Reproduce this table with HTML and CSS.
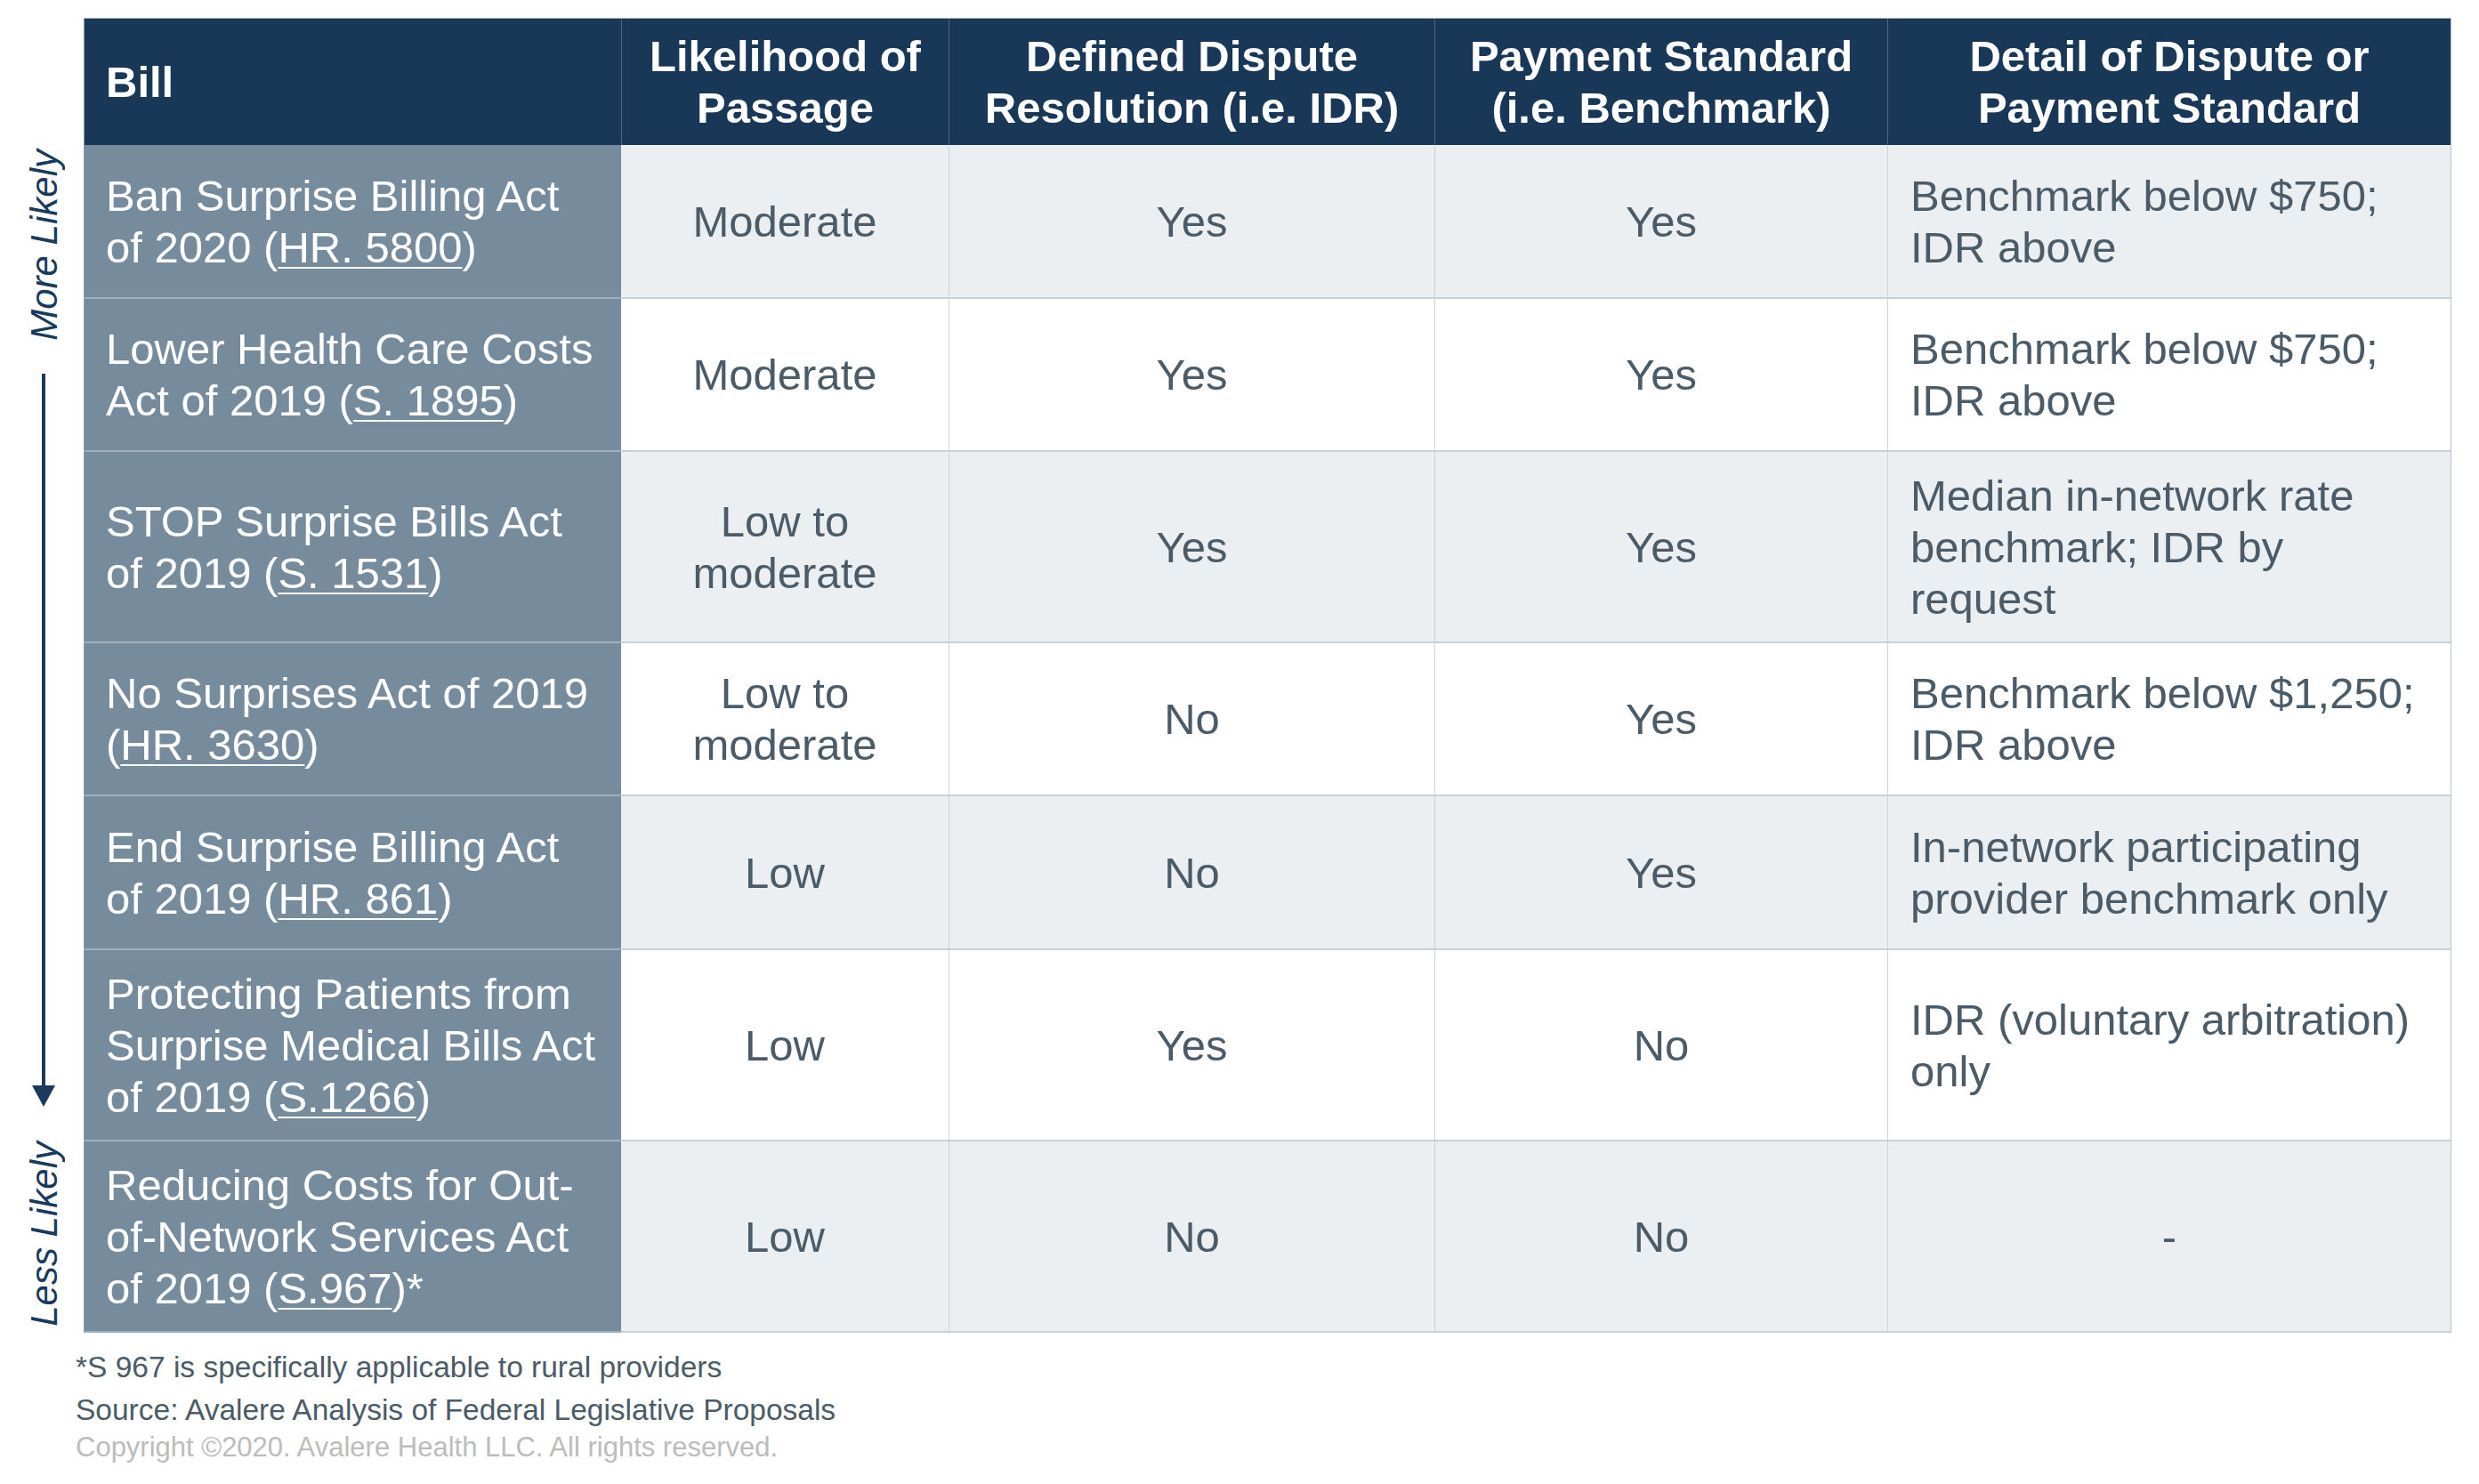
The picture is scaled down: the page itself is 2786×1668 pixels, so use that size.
FILE: index.html
```html
<!DOCTYPE html>
<html lang="en">
<head>
<meta charset="utf-8">
<title>Surprise Billing Legislation</title>
<link rel="stylesheet" href="styles.css">
</head>
<body>
<div class="page">
  <div class="figure">
    <div class="gutter">
      <div class="axis-label">More Likely</div>
      <div class="axis-line"></div>
      <div class="axis-head"></div>
      <div class="axis-label">Less Likely</div>
    </div>
    <div class="table">
      <div class="row head">
        <div class="cell bill"><div class="txt">Bill</div></div>
        <div class="cell center"><div class="txt">Likelihood of<br>Passage</div></div>
        <div class="cell center"><div class="txt">Defined Dispute<br>Resolution (i.e. IDR)</div></div>
        <div class="cell center"><div class="txt">Payment Standard<br>(i.e. Benchmark)</div></div>
        <div class="cell center"><div class="txt">Detail of Dispute or<br>Payment Standard</div></div>
      </div>
      <div class="row body shade h173">
        <div class="cell bill"><div class="txt">Ban Surprise Billing Act<br>of 2020 (<span class="ref">HR. 5800</span>)</div></div>
        <div class="cell center"><div class="txt">Moderate</div></div>
        <div class="cell center sep"><div class="txt">Yes</div></div>
        <div class="cell center sep"><div class="txt">Yes</div></div>
        <div class="cell detail sep"><div class="txt">Benchmark below $750;<br>IDR above</div></div>
      </div>
      <div class="row body h172">
        <div class="cell bill"><div class="txt">Lower Health Care Costs<br>Act of 2019 (<span class="ref">S. 1895</span>)</div></div>
        <div class="cell center"><div class="txt">Moderate</div></div>
        <div class="cell center sep"><div class="txt">Yes</div></div>
        <div class="cell center sep"><div class="txt">Yes</div></div>
        <div class="cell detail sep"><div class="txt">Benchmark below $750;<br>IDR above</div></div>
      </div>
      <div class="row body shade h215">
        <div class="cell bill"><div class="txt">STOP Surprise Bills Act<br>of 2019 (<span class="ref">S. 1531</span>)</div></div>
        <div class="cell center"><div class="txt">Low to<br>moderate</div></div>
        <div class="cell center sep"><div class="txt">Yes</div></div>
        <div class="cell center sep"><div class="txt">Yes</div></div>
        <div class="cell detail sep"><div class="txt">Median in-network rate<br>benchmark; IDR by<br>request</div></div>
      </div>
      <div class="row body h172">
        <div class="cell bill"><div class="txt">No Surprises Act of 2019<br>(<span class="ref">HR. 3630</span>)</div></div>
        <div class="cell center"><div class="txt">Low to<br>moderate</div></div>
        <div class="cell center sep"><div class="txt">No</div></div>
        <div class="cell center sep"><div class="txt">Yes</div></div>
        <div class="cell detail sep"><div class="txt">Benchmark below $1,250;<br>IDR above</div></div>
      </div>
      <div class="row body shade h173">
        <div class="cell bill"><div class="txt">End Surprise Billing Act<br>of 2019 (<span class="ref">HR. 861</span>)</div></div>
        <div class="cell center"><div class="txt">Low</div></div>
        <div class="cell center sep"><div class="txt">No</div></div>
        <div class="cell center sep"><div class="txt">Yes</div></div>
        <div class="cell detail sep"><div class="txt">In-network participating<br>provider benchmark only</div></div>
      </div>
      <div class="row body h215">
        <div class="cell bill"><div class="txt">Protecting Patients from<br>Surprise Medical Bills Act<br>of 2019 (<span class="ref">S.1266</span>)</div></div>
        <div class="cell center"><div class="txt">Low</div></div>
        <div class="cell center sep"><div class="txt">Yes</div></div>
        <div class="cell center sep"><div class="txt">No</div></div>
        <div class="cell detail sep"><div class="txt">IDR (voluntary arbitration)<br>only</div></div>
      </div>
      <div class="row body shade h215">
        <div class="cell bill"><div class="txt">Reducing Costs for Out-<br>of-Network Services Act<br>of 2019 (<span class="ref">S.967</span>)*</div></div>
        <div class="cell center"><div class="txt">Low</div></div>
        <div class="cell center sep"><div class="txt">No</div></div>
        <div class="cell center sep"><div class="txt">No</div></div>
        <div class="cell center sep"><div class="txt">-</div></div>
      </div>
    </div>
  </div>
  <div class="notes">
    <p class="note">*S 967 is specifically applicable to rural providers</p>
    <p class="note">Source: Avalere Analysis of Federal Legislative Proposals</p>
    <p class="copyright">Copyright ©2020. Avalere Health LLC. All rights reserved.</p>
  </div>
</div>
</body>
</html>
```
FILE: styles.css
```css
* {
  box-sizing: border-box;
}

body {
  margin: 0;
  background: #ffffff;
  font-family: "Liberation Sans", Arial, sans-serif;
  color: #4b5b67;
}

.page {
  padding-top: 20px;
}

.figure {
  display: flex;
  align-items: flex-start;
}

/* left "likelihood" axis */
.gutter {
  width: 94px;
  flex: none;
  display: flex;
  flex-direction: column;
  align-items: center;
  padding-top: 148px;
  padding-left: 4px;
}

.axis-label {
  writing-mode: vertical-rl;
  transform: rotate(180deg);
  font-style: italic;
  font-size: 42px;
  line-height: 47px;
  color: #183a5c;
  white-space: nowrap;
}

.axis-line {
  width: 4px;
  height: 800px;
  margin-top: 37px;
  background: #1b3a5a;
}

.axis-head {
  width: 0;
  height: 0;
  border-left: 13px solid transparent;
  border-right: 13px solid transparent;
  border-top: 24px solid #1b3a5a;
  margin-bottom: 39px;
}

/* table */
.table {
  width: 2661px;
  flex: none;
  border-top: 1px solid #a9b7c3;
  border-left: 1px solid #8b9dac;
  border-right: 1px solid #b9c4cd;
}

.row {
  display: grid;
  grid-template-columns: 603px 368px 546px 509px 633px;
}

.cell {
  display: flex;
  align-items: center;
  font-size: 49px;
  line-height: 58px;
  white-space: nowrap;
}

.cell.center {
  justify-content: center;
  text-align: center;
}

.head {
  height: 142px;
  background: #193756;
  color: #ffffff;
}

.head .cell {
  font-weight: bold;
}

.head .cell + .cell {
  border-left: 1px solid #4f6880;
}

.head .bill {
  padding-left: 24px;
}

.body .cell {
  border-bottom: 2px solid #c9d1d8;
}

.body.shade {
  background: #ebeff2;
}

.h172 { height: 172px; }
.h173 { height: 173px; }
.h215 { height: 215px; }

.body .bill {
  background: #768c9c;
  color: #ffffff;
  padding: 0 10px 0 24px;
  border-bottom-color: #9fb0bd;
}

.cell.sep {
  border-left: 1px solid #cbd4db;
}

.cell.detail {
  padding: 0 16px 0 25px;
}

.ref {
  text-decoration: underline;
  text-decoration-thickness: 2px;
  text-underline-offset: 5px;
}

/* footnotes */
.notes {
  padding: 15px 0 0 85px;
}

.notes p {
  margin: 0;
}

.note {
  font-size: 33.5px;
  line-height: 48px;
  color: #4b5b67;
}

.copyright {
  font-size: 31px;
  line-height: 36px;
  color: #bcbcbc;
}
```
